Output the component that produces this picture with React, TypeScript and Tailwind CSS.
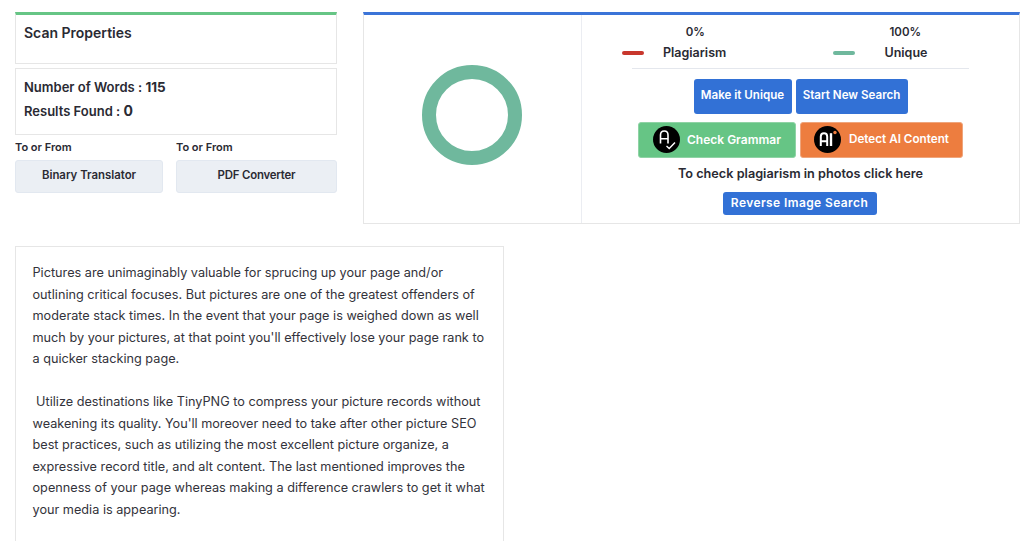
import React from "react";

function GrammarIcon() {
  return (
    <svg width="27" height="27" viewBox="0 0 27 27" className="shrink-0">
      <circle cx="13.5" cy="13.5" r="13.5" fill="#000" />
      <path d="M7.5 17.5V9C7.5 6.6 9.2 5 11.3 5S15 6.6 15 9V17.5M7.5 12.8H15" fill="none" stroke="#fff" strokeWidth="1.6" />
      <path d="M13.5 20L16.2 22.5L22 16.5" fill="none" stroke="#fff" strokeWidth="1.4" />
    </svg>
  );
}

function AiIcon() {
  return (
    <svg width="27" height="27" viewBox="0 0 27 27" className="shrink-0">
      <circle cx="13.5" cy="13.5" r="13.5" fill="#000" />
      <path d="M6.8 20V10.5C6.8 8.4 8.2 7.2 10 7.2S13.2 8.4 13.2 10.5V20M6.8 15.2H13.2" fill="none" stroke="#fff" strokeWidth="2" />
      <path d="M17 7.2V20" fill="none" stroke="#fff" strokeWidth="2.4" />
      <circle cx="21" cy="6.5" r="1.7" fill="#ed7d3f" />
    </svg>
  );
}

const body1 =
  "Pictures are unimaginably valuable for sprucing up your page and/or outlining critical focuses. But pictures are one of the greatest offenders of moderate stack times. In the event that your page is weighed down as well much by your pictures, at that point you'll effectively lose your page rank to a quicker stacking page.";
const body2 =
  "\u00a0Utilize destinations like TinyPNG to compress your picture records without weakening its quality. You'll moreover need to take after other picture SEO best practices, such as utilizing the most excellent picture organize, a expressive record title, and alt content. The last mentioned improves the openness of your page whereas making a difference crawlers to get it what your media is appearing.";

export default function App() {
  return (
    <div className="h-[541px] overflow-hidden bg-white font-['Inter',sans-serif] text-[#212529]">
      <div className="flex items-start pl-[15px] pt-[12px]">
        <div className="w-[322px] shrink-0">
          <div className="h-[52px] border border-[#e6e6e6] border-t-[3px] border-t-[#66c585] px-[8px] pt-[9px]">
            <h2 className="text-[14px] font-semibold leading-[18px] text-[#2a2a33]">Scan Properties</h2>
          </div>
          <div className="mt-[4px] h-[67px] border border-[#e6e6e6] px-[8px] pt-[6px] text-[13px] font-semibold text-[#2a2a33]">
            <p className="h-[24px] leading-[24px]">
              Number of Words : <span className="text-[13.5px] font-bold leading-none">115</span>
            </p>
            <p className="h-[24px] leading-[24px]">
              Results Found : <span className="text-[14px] font-bold leading-none">0</span>
            </p>
          </div>
          <div className="mt-[4px] grid grid-cols-[148px_161px] gap-x-[13px]">
            <div>
              <p className="text-[11px] font-semibold leading-[16px] text-[#2a2a33]">To or From</p>
              <div className="mt-[5px] flex h-[33px] items-center justify-center rounded-[3px] border border-[#e2e8f0] bg-[#ebeff4] pb-[1px] text-[11.4px] font-semibold text-[#2a2a33]">
                Binary Translator
              </div>
            </div>
            <div>
              <p className="text-[11px] font-semibold leading-[16px] text-[#2a2a33]">To or From</p>
              <div className="mt-[5px] flex h-[33px] items-center justify-center rounded-[3px] border border-[#e2e8f0] bg-[#ebeff4] pb-[1px] text-[11.4px] font-semibold tracking-[-0.2px] text-[#2a2a33]">
                PDF Converter
              </div>
            </div>
          </div>
        </div>

        <div className="ml-[26px] flex h-[212px] w-[657px] shrink-0 border border-[#e6e6e6] border-t-[3px] border-t-[#3b74d8]">
          <div className="flex w-[218px] shrink-0 items-center justify-center border-r border-[#ebedf2] pb-[8px] pr-[2px]">
            <div className="h-[100px] w-[100px] rounded-full border-[14px] border-[#6fb89d]" />
          </div>
          <div className="flex min-w-0 flex-1 flex-col items-center">
            <div className="mt-[6px] w-[337px] border-b border-[#e4e7ed] pb-[5px]">
              <div className="grid grid-cols-2 text-[#2a2a33]">
                <div className="flex flex-col items-center pr-[42px]">
                  <span className="text-[11.5px] font-semibold leading-[22px]">0%</span>
                </div>
                <div className="flex flex-col items-center pl-[41px]">
                  <span className="text-[11.5px] font-semibold leading-[22px]">100%</span>
                </div>
              </div>
              <div className="grid grid-cols-2 text-[12.5px] font-semibold text-[#2a2a33]">
                <div className="flex items-center">
                  <span className="-ml-[10px] h-[4px] w-[22px] rounded-full bg-[#c8372d]" />
                  <span className="ml-[19px] leading-[20px]">Plagiarism</span>
                </div>
                <div className="flex items-center">
                  <span className="ml-[32px] h-[4px] w-[22px] rounded-full bg-[#6fb89d]" />
                  <span className="ml-[30px] leading-[20px]">Unique</span>
                </div>
              </div>
            </div>
            <div className="mt-[10px] flex gap-[4px]">
              <button className="h-[35px] w-[98px] rounded-[3px] bg-[#3271d6] pb-[1px] text-[11.6px] font-semibold text-white">Make it Unique</button>
              <button className="h-[35px] w-[112px] rounded-[3px] bg-[#3271d6] pb-[1px] text-[11.6px] font-semibold text-white">Start New Search</button>
            </div>
            <div className="mt-[8px] flex gap-[4px]">
              <button className="flex h-[36px] w-[158px] items-center gap-[7px] rounded-[3px] border border-[#8fd3a5] bg-[#66c585] pl-[14px] pb-[1px] text-[12px] font-semibold text-white">
                <GrammarIcon />
                Check Grammar
              </button>
              <button className="flex h-[36px] w-[163px] items-center gap-[8px] rounded-[3px] border border-[#efa57c] bg-[#ed7d3f] pl-[13px] pb-[1px] text-[11.7px] font-semibold text-white">
                <AiIcon />
                Detect AI Content
              </button>
            </div>
            <p className="mt-[7px] text-[12.7px] font-semibold leading-[18px] text-[#2a2a33]">To check plagiarism in photos click here</p>
            <button className="mt-[9px] -translate-x-[1px] h-[23px] w-[154px] rounded-[3px] bg-[#3271d6] pb-[1px] text-[12px] font-semibold tracking-[0.4px] text-white">Reverse Image Search</button>
          </div>
        </div>
      </div>

      <div className="ml-[15px] mt-[22px] w-[489px] border border-[#e6e6e6] pl-[16.5px] pr-[13px] pt-[15px] pb-[40px] text-[12.7px] leading-[21.5px] text-[#33333b]">
        <p>{body1}</p>
        <p className="mt-[21.5px]">{body2}</p>
      </div>
    </div>
  );
}
